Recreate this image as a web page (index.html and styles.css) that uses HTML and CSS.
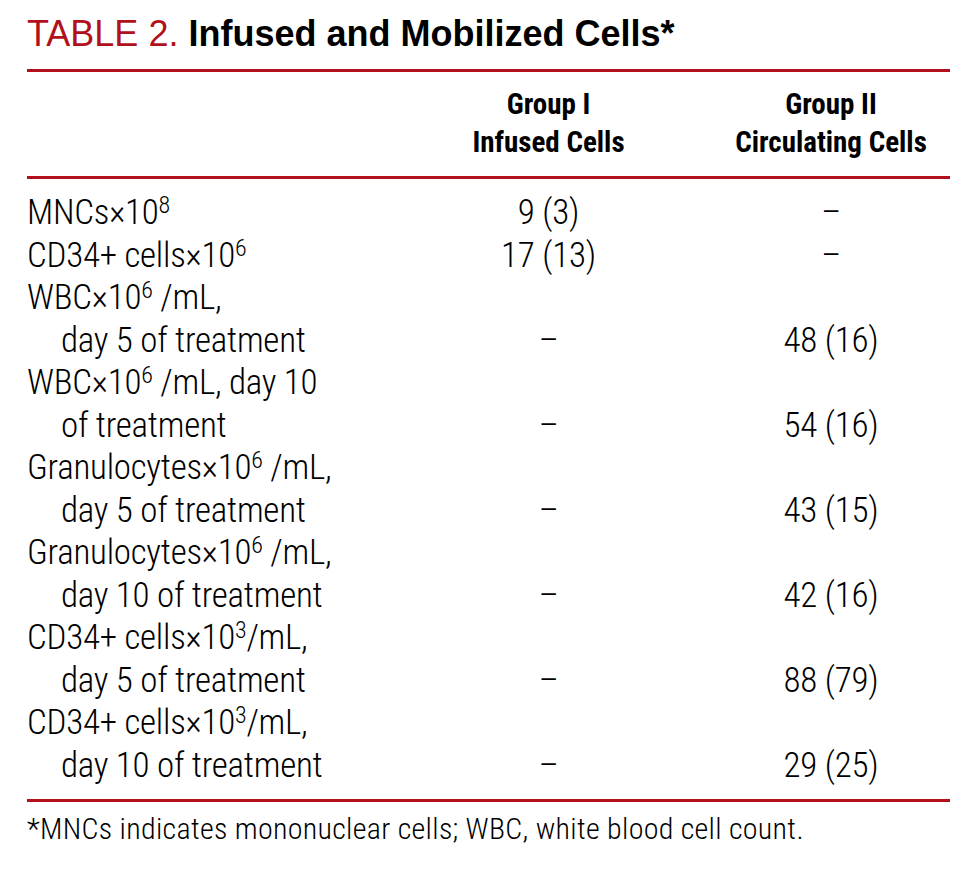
FILE: index.html
```html
<!DOCTYPE html>
<html>
<head>
<meta charset="utf-8">
<link rel="stylesheet" href="styles.css">
</head>
<body>
<div class="page">
  <h1 class="title"><span class="label">TABLE 2.</span> <span class="name">Infused and Mobilized Cells*</span></h1>
  <table class="data">
    <colgroup>
      <col class="c1"><col class="c2"><col class="c3">
    </colgroup>
    <thead>
      <tr>
        <th class="blank"></th>
        <th>Group I<br>Infused Cells</th>
        <th>Group II<br>Circulating Cells</th>
      </tr>
    </thead>
    <tbody>
      <tr><td class="lab">MNCs×10<sup>8</sup></td><td>9 (3)</td><td>–</td></tr>
      <tr><td class="lab">CD34+ cells×10<sup>6</sup></td><td>17 (13)</td><td>–</td></tr>
      <tr><td class="lab">WBC×10<sup>6</sup> /mL,<br>day 5 of treatment</td><td>–</td><td>48 (16)</td></tr>
      <tr><td class="lab">WBC×10<sup>6</sup> /mL, day 10<br>of treatment</td><td>–</td><td>54 (16)</td></tr>
      <tr><td class="lab">Granulocytes×10<sup>6</sup> /mL,<br>day 5 of treatment</td><td>–</td><td>43 (15)</td></tr>
      <tr><td class="lab">Granulocytes×10<sup>6</sup> /mL,<br>day 10 of treatment</td><td>–</td><td>42 (16)</td></tr>
      <tr><td class="lab">CD34+ cells×10<sup>3</sup>/mL,<br>day 5 of treatment</td><td>–</td><td>88 (79)</td></tr>
      <tr><td class="lab">CD34+ cells×10<sup>3</sup>/mL,<br>day 10 of treatment</td><td>–</td><td>29 (25)</td></tr>
    </tbody>
  </table>
  <p class="note">*MNCs indicates mononuclear cells; WBC, white blood cell count.</p>
</div>
</body>
</html>
```

FILE: styles.css
```css
html, body {
  margin: 0;
  padding: 0;
  background: #ffffff;
}

.page {
  width: 923px;
  padding: 14px 0 0 27px;
  color: #000;
}

.title {
  margin: 0;
  padding-bottom: 15px;
  border-bottom: 3px solid #b1101c;
  font-family: "Liberation Sans", Arial, sans-serif;
  font-size: 36px;
  line-height: 40px;
  font-weight: normal;
  white-space: nowrap;
}

.title .label {
  color: #b1101c;
}

.title .name {
  font-weight: bold;
}

.data {
  width: 923px;
  border-collapse: collapse;
  border-spacing: 0;
  font-family: "Liberation Sans Narrow", "Roboto Condensed", "Noto Sans", sans-serif;
  font-stretch: condensed;
}

.c1 { width: 358px; }
.c2 { width: 327px; }
.c3 { width: 238px; }

.data thead th {
  font-size: 29px;
  line-height: 38px;
  font-weight: bold;
  text-align: center;
  padding: 13px 0 15px 0;
  border-bottom: 3px solid #b1101c;
  vertical-align: bottom;
  white-space: nowrap;
}

.data tbody td {
  font-size: 35px;
  font-weight: 300;
  letter-spacing: -0.25px;
  line-height: 42.5px;
  padding: 0;
  text-align: center;
  vertical-align: bottom;
  white-space: nowrap;
}

.data tbody td.lab {
  text-align: left;
  padding-left: 34px;
  text-indent: -34px;
}

.data tbody tr:first-child td {
  padding-top: 13px;
}

.data tbody tr:last-child td {
  padding-bottom: 12px;
  border-bottom: 3px solid #b1101c;
}

.data sup {
  font-size: 24px;
  line-height: 0;
  vertical-align: 11px;
}

.note {
  margin: 0;
  padding-top: 10px;
  font-family: "Liberation Sans Narrow", "Roboto Condensed", "Noto Sans", sans-serif;
  font-stretch: condensed;
  font-weight: 300;
  font-size: 30px;
  letter-spacing: 0.3px;
  line-height: 34px;
  white-space: nowrap;
}
```
